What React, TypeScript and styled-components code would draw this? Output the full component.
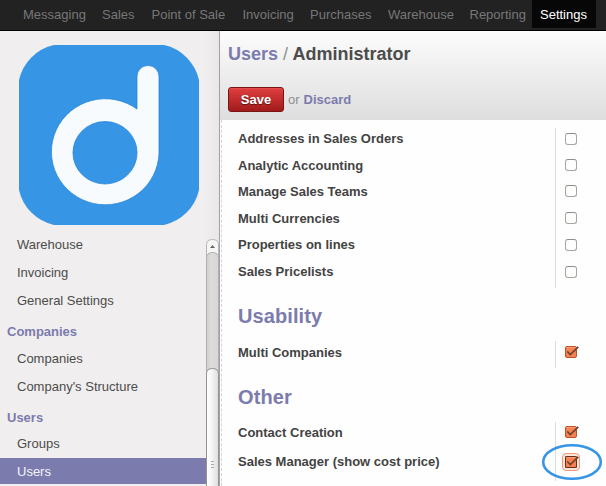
import React from 'react';
import styled, { createGlobalStyle } from 'styled-components';

const Global = createGlobalStyle`
  * { box-sizing: border-box; }
  body { margin: 0; overflow: hidden; font-family: 'Liberation Sans', Arial, sans-serif; font-size: 13px; color: #4c4c4c; }
`;

const Page = styled.div`
  width: 606px; height: 486px; overflow: hidden; display: flex; flex-direction: column; background: #fff;
`;
const Nav = styled.nav`
  height: 31px; flex: none; display: flex; padding-left: 15px; background: #222; border-bottom: 1px solid #000;
`;
const NavItem = styled.a<{ $w: number; $active?: boolean }>`
  width: ${p => p.$w}px; flex: none;
  height: 28px; line-height: 30px; padding-left: 8px; white-space: nowrap;
  color: ${p => (p.$active ? '#fff' : '#777')};
  background: ${p => (p.$active ? '#070707' : 'transparent')};
`;
const Body = styled.div`display: flex; flex: 1; min-height: 0;`;

const Sidebar = styled.aside`
  width: 220px; flex: none; display: flex; flex-direction: column; border-right: 1px solid #a3a1a7;
  background: linear-gradient(to right, #f0eeee 205px, #e9e7e8 219px);
`;
const LogoBox = styled.div`height: 208px; flex: none; padding: 14px 0 0 19px;`;
const MenuArea = styled.div`flex: 1; min-height: 0; display: flex;`;
const Menu = styled.div`
  flex: 1; min-width: 0; overflow: hidden; display: flex; flex-direction: column; background: #f0eeee;
  margin-top: -8px;
`;
const MenuItem = styled.a<{ $active?: boolean }>`
  height: 26px; flex: none; line-height: 28px; margin-bottom: 2px; padding-left: 17px;
  color: ${p => (p.$active ? '#f4f4fb' : '#4c4c4c')};
  background: ${p => (p.$active ? '#7c7bad' : 'transparent')};
`;
const MenuHeading = styled.div<{ $tight?: boolean }>`
  height: 25px; flex: none; line-height: 25px; margin: 4px 0 ${p => (p.$tight ? 0 : 1)}px; padding-left: 7px;
  font-weight: bold; color: #7c7bad;
`;
const ScrollBar = styled.div`width: 13px; flex: none;`;

const Main = styled.main`flex: 1; min-width: 0; display: flex; flex-direction: column;`;
const Header = styled.header`
  height: 89px; flex: none; padding: 12px 0 0 8px; background: linear-gradient(#fcfcfc, #dedede);
`;
const Title = styled.h1`
  margin: 0; height: 22px; line-height: 22px; font-size: 18px; white-space: nowrap;
`;
const Crumb = styled.span`color: #7c7bad;`;
const Slash = styled.span`font-weight: normal; color: #8f8f8f;`;
const Actions = styled.div`display: flex; align-items: center; margin-top: 22px; height: 25px; color: #8f8f8f;`;
const SaveButton = styled.button`
  width: 56px; height: 25px; margin-right: 4px; padding: 0; border: 1px solid #771414; border-radius: 3px;
  background: linear-gradient(#df3f3f, #a21a1a); box-shadow: inset 0 1px #e64b4b;
  font: bold 13px 'Liberation Sans', Arial, sans-serif; color: #fff; text-shadow: 0 1px 1px rgba(0,0,0,.5);
`;
const Discard = styled.a`margin-left: 4px; font-weight: bold; color: #7c7bad;`;

const Form = styled.div`
  flex: 1; min-height: 0; margin-left: 1px; padding: 8px 0 0 16px; border-left: 1px dashed #d5d4df; background: #fefefe;
`;
const Group = styled.div<{ $gap: number }>`
  display: grid; grid-template-columns: 318px 1fr; margin-bottom: ${p => p.$gap}px;
`;
const Labels = styled.div`border-right: 1px solid #ddd;`;
const Label = styled.div<{ $h: number; $top: number }>`
  height: ${p => p.$h}px; padding-top: ${p => p.$top}px; line-height: 15px;
  font-weight: bold; color: #434343; white-space: nowrap;
`;
const Checks = styled.div`padding-left: 9px;`;
const CheckCell = styled.div<{ $h: number; $top: number }>`
  height: ${p => p.$h}px; padding-top: ${p => p.$top}px;
`;
const CheckWrap = styled.span`position: relative; display: block; width: 12px; height: 12px;`;
const EmptyBox = styled.span`
  display: block; width: 12px; height: 12px; border: 1px solid #a8a49e; border-top-color: #908c86; border-radius: 3px; background: #fff;
`;
const Overlay = styled.svg<{ $x: number; $y: number }>`
  position: absolute; left: ${p => p.$x}px; top: ${p => p.$y}px; overflow: visible;
`;
const Section = styled.h2`
  margin: 0 0 13px; height: 24px; line-height: 24px; font-size: 20px; letter-spacing: .1px; color: #7c7bad;
`;

const Logo = () => (
  <svg width="180" height="180" viewBox="0 0 180 180">
    <path d="M35 0H145A46 46 0 0 1 180 35V145A46 46 0 0 1 145 180H35A46 46 0 0 1 0 145V35A46 46 0 0 1 35 0Z" fill="#3795e6" />
    <path
      fillRule="evenodd"
      d="M118 64V31.500A11 11 0 0 1 140 31.500V108A53.800 53 0 1 1 118 64ZM86 76.500A32 31.200 0 1 0 86 139A32 31.200 0 1 0 86 76.500Z"
      fill="#f7fbfe" stroke="#1e7fd8" strokeWidth=".7"
    />
  </svg>
);

const Scroller = () => (
  <svg width="13" height="247" viewBox="0 0 13 247">
    <defs>
      <linearGradient id="track"><stop offset="0" stopColor="#d0cfcd" /><stop offset=".4" stopColor="#dddcda" /><stop offset="1" stopColor="#d8d7d5" /></linearGradient>
      <linearGradient id="thumb"><stop offset="0" stopColor="#fff" /><stop offset=".35" stopColor="#f8f8f8" /><stop offset="1" stopColor="#dedddc" /></linearGradient>
    </defs>
    <path d="M.5 30V6Q.5 .5 6.500 .5T12.500 6V30Z" fill="#f6f6f5" stroke="#b8b6b2" />
    <path d="M4 9L6.500 6L9 9Z" fill="#666" />
    <path d="M.5 250V19Q.5 13.500 6.500 13.500T12.500 19V250Z" fill="url(#track)" stroke="#b2b0ac" />
    <path d="M.5 250V135Q.5 129.500 6.500 129.500T12.500 135V250Z" fill="url(#thumb)" stroke="#96938f" />
    <path d="M5 222.500H8M5 225.500H8M5 228.500H8" stroke="#aaa" />
  </svg>
);

const Tick = ({ focused = false }: { focused?: boolean }) => (
  <Overlay $x={-4} $y={-4} width="20" height="20" viewBox="0 0 20 20">
    {focused && <rect x="1.500" y="1.500" width="17" height="17" rx="3.500" fill="#fce5da" stroke="#f29a77" />}
    <rect x="4.500" y="4.500" width="11" height="11" rx="1.500" fill="#f38151" stroke="#bd5129" />
    <path d="M5.500 5.500H14.500" stroke="#f69d77" />
    {focused && <rect x="4.500" y="4.500" width="11" height="11" fill="none" stroke="#111" strokeDasharray="1 1" />}
    <path d="M6.300 9.500L9.300 12.500L17.300 4.800" fill="none" stroke="#74412d" strokeWidth="1.700" />
  </Overlay>
);

type RowData = { text: string; h: number; textTop: number; boxTop: number; state?: 'checked' | 'focused' };

const CheckGroup = ({ rows, gap }: { rows: RowData[]; gap: number }) => (
  <Group $gap={gap}>
    <Labels>{rows.map(r => <Label key={r.text} $h={r.h} $top={r.textTop}>{r.text}</Label>)}</Labels>
    <Checks>
      {rows.map(r => (
        <CheckCell key={r.text} $h={r.h} $top={r.boxTop}>
          <CheckWrap>
            {r.state ? <Tick focused={r.state === 'focused'} /> : <EmptyBox />}
            {r.state === 'focused' && (
              <Overlay $x={-24} $y={-13} width="62" height="38" viewBox="0 0 62 38">
                <ellipse cx="31" cy="19" rx="28.800" ry="16.700" fill="none" stroke="#3795e6" strokeWidth="2.600" />
              </Overlay>
            )}
          </CheckWrap>
        </CheckCell>
      ))}
    </Checks>
  </Group>
);

const navItems = [
  { name: 'Messaging', w: 79 },
  { name: 'Sales', w: 49.5 },
  { name: 'Point of Sale', w: 91 },
  { name: 'Invoicing', w: 67.5 },
  { name: 'Purchases', w: 78 },
  { name: 'Warehouse', w: 81.5 },
  { name: 'Reporting', w: 70.5 },
  { name: 'Settings', w: 64 },
];
const salesRows: RowData[] = [
  { text: 'Addresses in Sales Orders', h: 27, textTop: 3, boxTop: 5 },
  { text: 'Analytic Accounting', h: 26, textTop: 3, boxTop: 4 },
  { text: 'Manage Sales Teams', h: 27, textTop: 3, boxTop: 4 },
  { text: 'Multi Currencies', h: 26, textTop: 3, boxTop: 4 },
  { text: 'Properties on lines', h: 27, textTop: 3, boxTop: 5 },
  { text: 'Sales Pricelists', h: 27, textTop: 3, boxTop: 5 },
];
const usabilityRows: RowData[] = [
  { text: 'Multi Companies', h: 27, textTop: 4, boxTop: 5, state: 'checked' },
];
const otherRows: RowData[] = [
  { text: 'Contact Creation', h: 27, textTop: 3, boxTop: 4, state: 'checked' },
  { text: 'Sales Manager (show cost price)', h: 32, textTop: 5, boxTop: 7, state: 'focused' },
];

export default function App() {
  return (
    <Page>
      <Global />
      <Nav>
        {navItems.map(n => <NavItem key={n.name} $w={n.w} $active={n.name === 'Settings'}>{n.name}</NavItem>)}
      </Nav>
      <Body>
        <Sidebar>
          <LogoBox><Logo /></LogoBox>
          <MenuArea>
            <Menu>
              <MenuItem>Warehouse</MenuItem>
              <MenuItem>Invoicing</MenuItem>
              <MenuItem>General Settings</MenuItem>
              <MenuHeading>Companies</MenuHeading>
              <MenuItem>Companies</MenuItem>
              <MenuItem>Company's Structure</MenuItem>
              <MenuHeading $tight>Users</MenuHeading>
              <MenuItem>Groups</MenuItem>
              <MenuItem $active>Users</MenuItem>
            </Menu>
            <ScrollBar><Scroller /></ScrollBar>
          </MenuArea>
        </Sidebar>
        <Main>
          <Header>
            <Title><Crumb>Users</Crumb> <Slash>/</Slash> Administrator</Title>
            <Actions>
              <SaveButton>Save</SaveButton>or<Discard>Discard</Discard>
            </Actions>
          </Header>
          <Form>
            <CheckGroup rows={salesRows} gap={16} />
            <Section>Usability</Section>
            <CheckGroup rows={usabilityRows} gap={17} />
            <Section>Other</Section>
            <CheckGroup rows={otherRows} gap={0} />
          </Form>
        </Main>
      </Body>
    </Page>
  );
}
